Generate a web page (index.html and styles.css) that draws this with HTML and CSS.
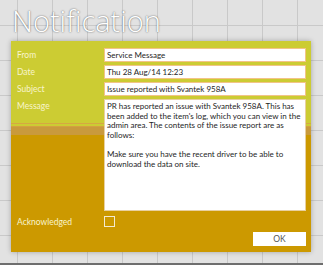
FILE: index.html
```html
<!DOCTYPE html>
<html>
<head>
<meta charset="utf-8">
<link rel="stylesheet" href="styles.css">
</head>
<body>
<div class="screen">
  <h1 class="title">Notification</h1>
  <div class="panel">
    <div class="form">
      <span class="lbl">From</span>
      <div class="field">Service Message</div>
      <span class="lbl">Date</span>
      <div class="field">Thu 28 Aug/14 12:23</div>
      <span class="lbl">Subject</span>
      <div class="field">Issue reported with Svantek 958A</div>
      <span class="lbl lbl-top">Message</span>
      <div class="field message">PR has reported an issue with Svantek 958A. This has been added to the item's log, which you can view in the admin area. The contents of the issue report are as follows:<br><br>Make sure you have the recent driver to be able to download the data on site.</div>
      <span class="lbl lbl-ack">Acknowledged</span>
      <div class="check-cell"><span class="checkbox"></span></div>
    </div>
    <div class="actions"><button class="ok">OK</button></div>
  </div>
  <div class="footer"></div>
</div>
</body>
</html>
```
FILE: styles.css
```css
html, body {
  margin: 0;
  padding: 0;
}
body {
  width: 323px;
  height: 265px;
  overflow: hidden;
  font-family: Lato, "Open Sans", sans-serif;
}
.screen {
  width: 323px;
  height: 265px;
  background-color: #e2e2e2;
  background-image:
    linear-gradient(to right, #c9c9c9 1px, transparent 1px),
    linear-gradient(to bottom, #c9c9c9 1px, transparent 1px);
  background-size: 35px 35px;
  background-position: 17px 25px;
  display: flex;
  flex-direction: column;
}
.title {
  margin: 0;
  height: 41px;
  box-sizing: border-box;
  padding: 3px 0 0 12px;
  font-family: "Open Sans", sans-serif;
  font-weight: 300;
  font-size: 29px;
  line-height: 36px;
  color: #ffffff;
  letter-spacing: 0;
  text-shadow: 0 0 2px rgba(0,0,0,0.45), 0 0 1px rgba(0,0,0,0.3);
}
.panel {
  margin-left: 11px;
  width: 300px;
  height: 211px;
  box-sizing: border-box;
  padding: 7px 5px 4px 6px;
  background: linear-gradient(to bottom,
    #cccc33 0, #cccc33 82px,
    #d6a842 82px, #d6a842 83px,
    #cccc33 83px, #cccc33 85px,
    #d4a040 85px, #d4a040 86px,
    #c99a3c 86px, #c99a3c 94px,
    #cc9900 94px, #cc9900 100%);
  box-shadow: 0 0 5px rgba(0,0,0,0.28);
  display: flex;
  flex-direction: column;
}
.form {
  display: grid;
  grid-template-columns: 87px 1fr;
  grid-template-rows: 14px 14px 14px 112px 11px;
  row-gap: 3px;
}
.lbl {
  font-size: 8.5px;
  color: #f8f4cc;
  align-self: center;
  line-height: 10px;
}
.lbl-top {
  align-self: start;
  padding-top: 2px;
}
.lbl-ack {
  margin-top: 4px;
}
.field {
  box-sizing: border-box;
  background: #ffffff;
  border: 1px solid #f2c487;
  font-size: 8px;
  line-height: 12px;
  color: #1e1e1e;
  padding: 0 2px;
  white-space: nowrap;
  overflow: hidden;
}
.message {
  white-space: normal;
  line-height: 9.6px;
  padding: 2px 2px;
  border-color: #e8d0a0;
}
.check-cell {
  margin-top: 2px;
  display: flex;
}
.checkbox {
  width: 11px;
  height: 11px;
  box-sizing: border-box;
  border: 1px solid #f4ead0;
}
.actions {
  margin-top: 7px;
  display: flex;
  justify-content: flex-end;
}
.ok {
  width: 53px;
  height: 14px;
  padding: 0;
  border: none;
  background: #ffffff;
  font-family: Lato, "Open Sans", sans-serif;
  font-size: 8.5px;
  color: #555555;
  line-height: 14px;
}
.footer {
  margin-top: auto;
  height: 2px;
  background: #6e6e6e;
}
```
